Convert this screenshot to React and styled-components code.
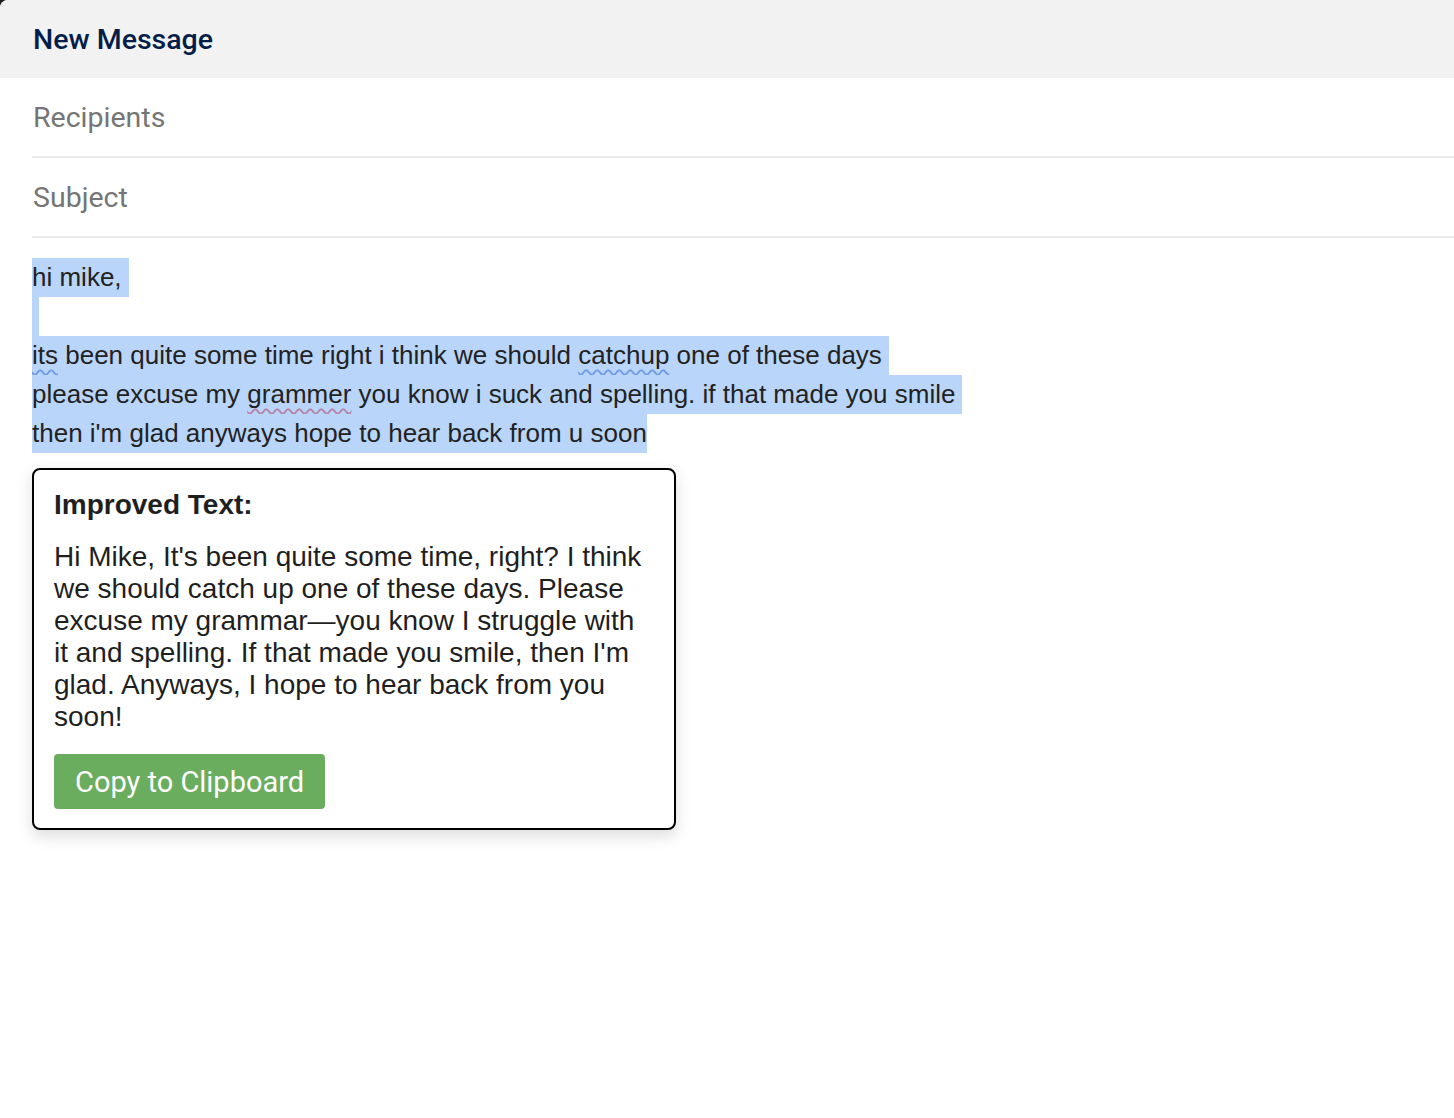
import React from 'react'
import styled, { createGlobalStyle } from 'styled-components'

const GlobalStyle = createGlobalStyle`
  html, body {
    margin: 0;
    padding: 0;
    background: #1f1f1f;
  }
  #root {
    min-height: 100vh;
    display: flex;
  }
`

const Window = styled.div`
  flex: 1;
  min-height: 100vh;
  background: #ffffff;
  border-top-left-radius: 8px;
  overflow: hidden;
`

const Header = styled.div`
  height: 78px;
  background: #f2f2f2;
  display: flex;
  align-items: center;
  padding: 0 33px;
  font-family: Roboto, "Noto Sans", sans-serif;
  font-size: 28.5px;
  font-weight: 500;
  color: #041e49;
  box-sizing: border-box;
`

const Fields = styled.div`
  padding-left: 32px;
`

const Field = styled.div`
  height: 80px;
  display: flex;
  align-items: center;
  padding-left: 1px;
  border-bottom: 2px solid #ececec;
  box-sizing: border-box;
  font-family: Roboto, "Noto Sans", sans-serif;
  font-size: 28.5px;
  color: #757575;
`

const Body = styled.div`
  padding: 20px 32px 0;
  font-family: "Liberation Sans", Arial, sans-serif;
  font-size: 26px;
  line-height: 39px;
  color: #222222;
`

const Line = styled.div`
  height: 39px;
`

const Sel = styled.span`
  display: inline-block;
  background: #b9d5fa;
  height: 39px;
  padding-right: ${p => (p.$pad ? '7px' : '0')};
  width: ${p => (p.$empty ? '7px' : 'auto')};
  vertical-align: top;
  white-space: pre;
`

const Squiggle = styled.span`
  text-decoration: underline wavy ${p => (p.$grammar ? '#b584a6' : '#6e9ce6')};
  text-decoration-thickness: 1.5px;
  text-underline-offset: 5px;
`

const Popup = styled.div`
  margin-top: 15px;
  width: 644px;
  box-sizing: border-box;
  border: 2px solid #000000;
  border-radius: 8px;
  padding: 20px 20px 19px;
  background: #ffffff;
  box-shadow: 0 6px 16px rgba(0, 0, 0, 0.14);
  font-family: "Liberation Sans", Arial, sans-serif;
  color: #1f1f1f;
`

const PopupTitle = styled.div`
  font-size: 28px;
  font-weight: 700;
  line-height: 30px;
  margin-bottom: 21px;
`

const PopupText = styled.p`
  margin: 0 0 21px;
  font-size: 28px;
  line-height: 32px;
`

const CopyButton = styled.button`
  display: block;
  height: 55px;
  padding: 0 21px;
  border: none;
  border-radius: 4px;
  background: #6aad5e;
  color: #ffffff;
  font-family: Roboto, "Noto Sans", sans-serif;
  font-size: 29px;
  cursor: pointer;
`

export default function App() {
  return (
    <>
      <GlobalStyle />
      <Window>
        <Header>New Message</Header>
        <Fields>
          <Field>Recipients</Field>
          <Field>Subject</Field>
        </Fields>
        <Body>
          <Line><Sel $pad>hi mike,</Sel></Line>
          <Line><Sel $empty /></Line>
          <Line>
            <Sel $pad>
              <Squiggle>its</Squiggle> been quite some time right i think we should <Squiggle>catchup</Squiggle> one of these days
            </Sel>
          </Line>
          <Line>
            <Sel $pad>
              please excuse my <Squiggle $grammar>grammer</Squiggle> you know i suck and spelling. if that made you smile
            </Sel>
          </Line>
          <Line><Sel>then i'm glad anyways hope to hear back from u soon</Sel></Line>
          <Popup>
            <PopupTitle>Improved Text:</PopupTitle>
            <PopupText>
              Hi Mike, It's been quite some time, right? I think we should catch up one of these days. Please excuse my grammar—you know I struggle with it and spelling. If that made you smile, then I'm glad. Anyways, I hope to hear back from you soon!
            </PopupText>
            <CopyButton>Copy to Clipboard</CopyButton>
          </Popup>
        </Body>
      </Window>
    </>
  )
}
